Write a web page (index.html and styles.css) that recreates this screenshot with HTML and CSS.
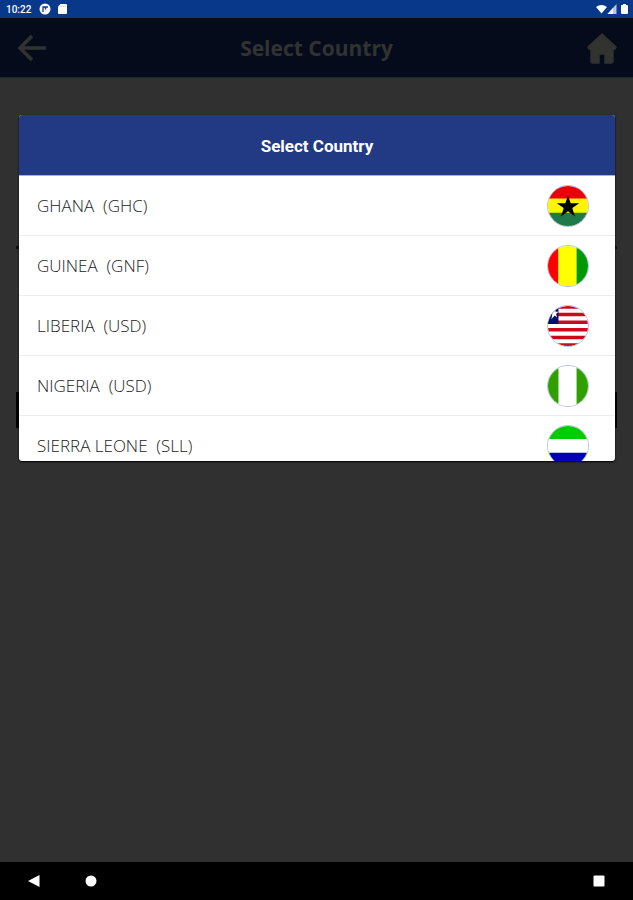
FILE: index.html
```html
<!DOCTYPE html>
<html lang="en">
<head>
    <meta charset="UTF-8">
    <meta name="viewport" content="width=device-width, initial-scale=1.0">
    <title>Select Country</title>
    <link rel="stylesheet" href="styles.css">
</head>
<body>
    <div class="status-bar">
        <span class="time">10:22</span>
        <svg class="status-icon" viewBox="0 0 12 12"><circle cx="6" cy="6" r="5.5" fill="#fff"/><path d="M4 9V4h5M6.500 6.500V4" fill="none" stroke="#08388a" stroke-width="1.300"/></svg>
        <svg class="status-icon" viewBox="0 0 12 12"><path d="M4.500 1H10q1 0 1 1v8q0 1-1 1H3q-1 0-1-1V3.500z" fill="#fff"/><path d="M5 2.500v1.500M7 2.500v1.500M9 2.500v1.500" stroke="#8fa5cf" stroke-width=".7"/></svg>
        <svg class="signal" viewBox="0 0 34 12"><path d="M1 4q5.500-4 11 0L6.500 10.500z" fill="#fff"/><path d="M12.500 11L21.500 1v10z" fill="#b9c6e4"/><path d="M12.500 11L18 5v6z" fill="#fff"/><path d="M26 2h2V1h3v1h1q1 0 1 1v7q0 1-1 1h-5q-1 0-1-1z" fill="#fff"/></svg>
    </div>

    <header class="app-bar">
        <button class="icon-btn" aria-label="Back">
            <svg width="30" height="30" viewBox="0 0 30 30"><path d="M29 15H3M15 3L3 15l12 12" fill="none" stroke="#313331" stroke-width="3.500"/></svg>
        </button>
        <h1>Select Country</h1>
        <button class="icon-btn" aria-label="Home">
            <svg width="32" height="32" viewBox="0 0 32 32"><path d="M16 2L2 15l1 2h2v12q0 2 2 2h6V22h6v9h6q2 0 2-2V17h2l1-2z" fill="#313331" stroke="#313331" stroke-width="1.500" stroke-linejoin="round"/></svg>
        </button>
    </header>

    <main class="page">
        <!-- form behind the dialog -->
        <div class="form">
            <div class="form-line"></div>
            <div class="form-submit"></div>
        </div>
        <div class="dialog" role="dialog" aria-labelledby="dialog-title">
            <h2 id="dialog-title">Select Country</h2>
            <ul class="country-list">
                <li>
                    <button class="country">
                        <span class="name">GHANA  (GHC)</span>
                        <svg class="flag" viewBox="0 0 42 42"><path fill="#e8000b" d="M0 0h42v14H0z"/><path fill="#fff500" d="M0 13h42v16H0z"/><path fill="#20794b" d="M0 28h42v14H0z"/><path d="M21 10l2.800 8h9l-7.300 5 2.800 9-7.300-5.500-7.300 5.500 2.800-9-7.300-5h9z"/></svg>
                    </button>
                </li>
                <li>
                    <button class="country">
                        <span class="name">GUINEA  (GNF)</span>
                        <svg class="flag" viewBox="0 0 42 42"><path fill="#f00" d="M0 0h11v42H0z"/><path fill="#ff0" d="M11 0h19v42H11z"/><path fill="#090" d="M30 0h12v42H30z"/></svg>
                    </button>
                </li>
                <li>
                    <button class="country">
                        <span class="name">LIBERIA  (USD)</span>
                        <svg class="flag" viewBox="0 0 42 42"><path fill="#fff" d="M0 0h42v42H0z"/><path stroke="#cc0a1c" stroke-width="3.600" d="M0 1h42M0 9h42M0 17h42M0 25h42M0 33h42M0 41h42"/><path fill="#00106b" d="M0 0h11v19H0z"/><path fill="#fff" d="M7 3l1 3h3l-2.500 2.500 1 3.500L7 10l-3.500 4 1-5L2 7l3.500-1z"/></svg>
                    </button>
                </li>
                <li>
                    <button class="country">
                        <span class="name">NIGERIA  (USD)</span>
                        <svg class="flag" viewBox="0 0 42 42"><path fill="#fff" d="M0 0h42v42H0z"/><path fill="#30a000" d="M0 0h11v42H0zM30 0h12v42H30z"/></svg>
                    </button>
                </li>
                <li>
                    <button class="country">
                        <span class="name">SIERRA LEONE  (SLL)</span>
                        <svg class="flag" viewBox="0 0 42 42"><path fill="#00cd00" d="M0 0h42v14H0z"/><path fill="#fff" d="M0 14h42v14H0z"/><path fill="#0000b8" d="M0 28h42v14H0z"/></svg>
                    </button>
                </li>
            </ul>
        </div>
    </main>

    <nav class="nav-bar">
        <button class="nav-btn" aria-label="Back"><svg width="12" height="12" viewBox="0 0 12 12"><path d="M11.500 0v12L0 6z" fill="#fff"/></svg></button>
        <button class="nav-btn" aria-label="Home"><svg width="12" height="12" viewBox="0 0 12 12"><circle cx="6" cy="6" r="5.500" fill="#fff"/></svg></button>
        <button class="nav-btn recent" aria-label="Recent apps"><svg width="12" height="12" viewBox="0 0 12 12"><rect x=".5" y=".5" width="11" height="11" rx="1" fill="#fff"/></svg></button>
    </nav>
</body>
</html>
```

FILE: styles.css
```css
* {
    box-sizing: border-box;
}
body {
    margin: 0;
    min-height: 100vh;
    display: flex;
    flex-direction: column;
    background-color: #303030;
    font-family: "Open Sans", sans-serif;
}
button {
    border: none;
    background: none;
    padding: 0;
    cursor: pointer;
}
svg {
    display: block;
}
.status-bar {
    display: flex;
    align-items: center;
    gap: 5px;
    height: 18px;
    padding: 0 4px 0 6px;
    background-color: #08388a;
    color: #fff;
}
.time {
    font-family: Roboto, sans-serif;
    font-size: 10px;
    font-weight: 500;
    margin-right: 3px;
}
.status-icon {
    width: 12px;
    height: 12px;
}
.signal {
    width: 34px;
    height: 12px;
    margin-left: auto;
}
.app-bar {
    display: flex;
    align-items: center;
    justify-content: space-between;
    height: 60px;
    padding: 0 15px 0 17px;
    background-color: #060b1b;
    border-bottom: 1px solid #242728;
}
.app-bar h1 {
    margin: 0;
    font-size: 21px;
    font-weight: 700;
    line-height: 28px;
    color: #313331;
}
.page {
    flex: 1;
    display: grid;
    align-items: start;
}
/* form and dialog share one cell, the dialog lies on top */
.form,
.dialog {
    grid-area: 1 / 1;
}
.form {
    margin: 168px 16px 0;
}
.form-line {
    height: 3px;
    background-color: #111;
}
.form-submit {
    height: 36px;
    margin-top: 143px;
    background-color: #000;
}
.dialog {
    margin: 37px 18px 0 19px;
    border-radius: 3px;
    overflow: hidden;
    background-color: #fff;
    box-shadow: 0 1px 2px #000;
}
.dialog h2 {
    margin: 0;
    background-color: #223a83;
    border-bottom: 1px solid #a9b2cf;
    color: #fff;
    font-family: Roboto, sans-serif;
    font-size: 17px;
    font-weight: 700;
    line-height: 62px;
    height: 61px;
    text-align: center;
}
.country-list {
    list-style: none;
    margin: 0;
    padding: 0;
    max-height: 285px;
    overflow: hidden;
}
.country {
    display: flex;
    align-items: center;
    justify-content: space-between;
    width: 100%;
    height: 60px;
    padding: 0 26px 0 18px;
    border-bottom: 1px solid #eee;
    font-family: "Open Sans", sans-serif;
    font-size: 17px;
    font-weight: 300;
    line-height: 24px;
    color: #222;
}
.name {
    white-space: pre;
}
.flag {
    width: 42px;
    height: 42px;
    border: 1px solid #b5c5e8;
    border-radius: 50%;
}
.nav-bar {
    display: flex;
    align-items: center;
    gap: 45px;
    height: 38px;
    padding: 0 28px;
    background-color: #000;
}
.recent {
    margin-left: auto;
}
```
